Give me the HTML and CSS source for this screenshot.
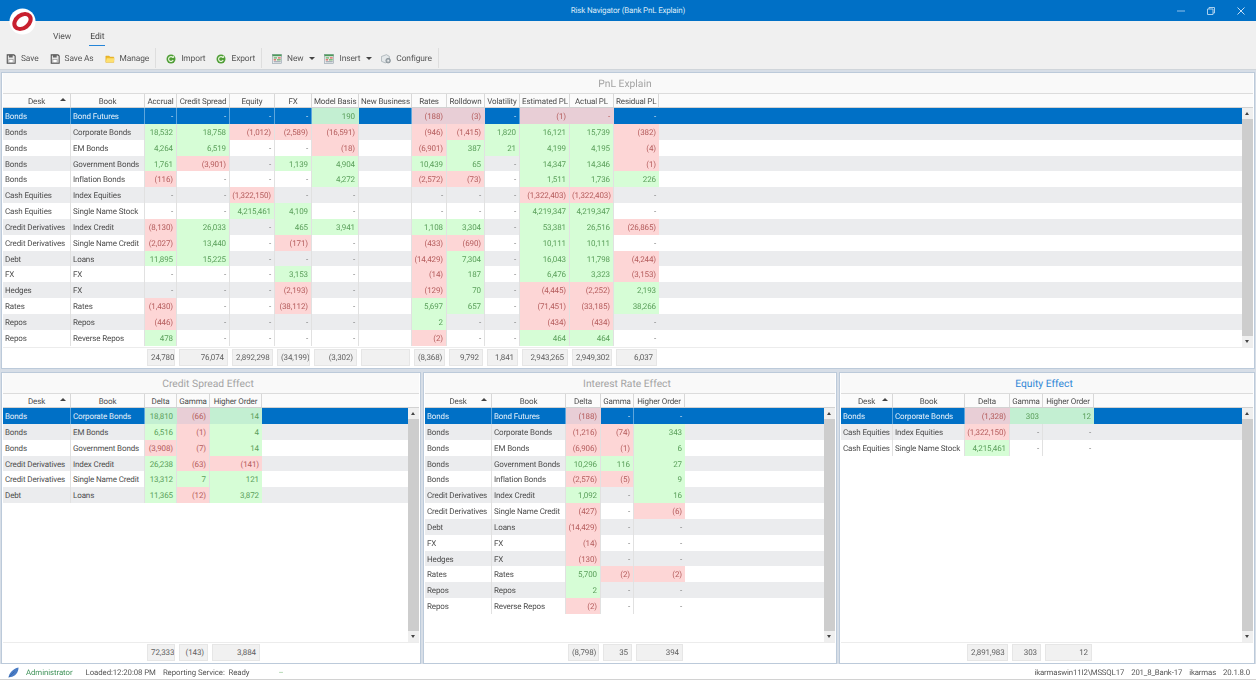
FILE: index.html
```html
<!DOCTYPE html>
<html lang="en">
<head>
<meta charset="utf-8">
<title>Risk Navigator (Bank PnL Explain)</title>
<link rel="stylesheet" href="styles.css">
</head>
<body>
<svg class="defs" width="0" height="0" aria-hidden="true">
  <symbol id="i-save" viewBox="0 0 12 12"><path d="M1.500 1h8l1.500 1.500V11h-9.500z" fill="#e6e6e6" stroke="#505050" stroke-width="1.300"/><rect x="3.500" y="1" width="4.500" height="3.200" fill="#666"/><rect x="3.500" y="6.500" width="5" height="4" fill="#fff" stroke="#777" stroke-width=".6"/></symbol>
  <symbol id="i-folder" viewBox="0 0 12 12"><path d="M1 2.500h4l1 1.200h4.500V10H1z" fill="#f0bb2c" stroke="#d9a520" stroke-width=".6"/><path d="M2 5.200h9.500L10.400 10H1z" fill="#fde070"/></symbol>
  <symbol id="i-cycle" viewBox="0 0 12 12"><circle cx="6" cy="6" r="5.400" fill="#4f9e36"/><path d="M8.600 7.300A2.900 2.900 0 1 1 8.300 4.200" fill="none" stroke="#e8f6dc" stroke-width="1.400"/><path d="M6.900 4.800l3-.2-.8-2.800z" fill="#e8f6dc"/></symbol>
  <symbol id="i-sheet" viewBox="0 0 12 12"><rect x=".5" y=".5" width="11" height="11" fill="#f4f4f4" stroke="#8a9aa6" stroke-width=".7"/><rect x=".5" y=".5" width="11" height="2.200" fill="#4d9a5a"/><rect x="2" y="4" width="4" height="1.400" fill="#5aa85a"/><rect x="7" y="4" width="3.500" height="1.400" fill="#d2524a"/><rect x="2" y="6.300" width="3" height="1.400" fill="#d2524a"/><rect x="6" y="6.300" width="4.500" height="1.400" fill="#5aa85a"/><rect x="2" y="8.600" width="8.500" height="1.400" fill="#9aa6b0"/></symbol>
  <symbol id="i-config" viewBox="0 0 12 12"><path d="M.5 3l6-2.200 3.500 2v5.700l-5 2.200-4.500-2z" fill="#e4e8ea" stroke="#8c979e" stroke-width=".7"/><circle cx="8.600" cy="8" r="2.800" fill="#a8b2b8" stroke="#70797f" stroke-width=".7"/><circle cx="8.600" cy="8" r="1" fill="#f4f4f4"/></symbol>
</svg>
<div class="app">
  <header class="titlebar">
    <span class="title">Risk Navigator (Bank PnL Explain)</span>
    <div class="winctl">
      <svg class="wi" viewBox="0 0 10 10"><path d="M1 5h8" stroke="#8fc0ea" stroke-width="1"/></svg>
      <svg class="wi" viewBox="0 0 10 10"><path d="M1.500 3h5.500v5.500H1.500zM3 3V1.500h5.500V7H7" fill="none" stroke="#a8cfee" stroke-width="1"/></svg>
      <svg class="wi" viewBox="0 0 10 10"><path d="M1.500 1.500l7 7M8.500 1.500l-7 7" stroke="#c4def4" stroke-width="1"/></svg>
    </div>
  </header>
  <svg class="logo" viewBox="0 0 28 28"><circle cx="14" cy="14" r="13.500" fill="#fff"/><g transform="rotate(-38 14 14)"><path d="M2.500 14a11.500 8.800 0 1 0 23 0a11.500 8.800 0 1 0-23 0Z M6.800 14a7.200 4.500 0 1 0 14.400 0a7.200 4.500 0 1 0-14.400 0Z" fill="#c8202f" fill-rule="evenodd"/></g></svg>
  <nav class="tabs"><span class="tab">View</span><span class="tab active">Edit</span></nav>
  <div class="toolbar">
    <div class="tgroup">
      <span class="tool"><svg class="ti"><use href="#i-save"/></svg>Save</span>
      <span class="tool"><svg class="ti"><use href="#i-save"/></svg>Save As</span>
      <span class="tool"><svg class="ti"><use href="#i-folder"/></svg>Manage</span>
    </div>
    <div class="tgroup">
      <span class="tool"><svg class="ti"><use href="#i-cycle"/></svg>Import</span>
      <span class="tool"><svg class="ti"><use href="#i-cycle"/></svg>Export</span>
    </div>
    <div class="tgroup">
      <span class="tool"><svg class="ti"><use href="#i-sheet"/></svg>New<b class="caret"></b></span>
      <span class="tool"><svg class="ti"><use href="#i-sheet"/></svg>Insert<b class="caret"></b></span>
      <span class="tool"><svg class="ti"><use href="#i-config"/></svg>Configure</span>
    </div>
  </div>
  <main class="content">
    <section class="panel pnl">
      <h2 class="ptitle">PnL Explain</h2>
      <div class="row head"><div class="sorted">Desk</div><div>Book</div><div>Accrual</div><div>Credit Spread</div><div>Equity</div><div>FX</div><div>Model Basis</div><div>New Business</div><div>Rates</div><div>Rolldown</div><div>Volatility</div><div>Estimated PL</div><div>Actual PL</div><div>Residual PL</div></div>
      <div class="gridbody">
        <div class="rows">
          <div class="row sel"><div class="l">Bonds</div><div class="l">Bond Futures</div><div>-</div><div>-</div><div>-</div><div>-</div><div class="g">190</div><div></div><div class="r">(188)</div><div class="r">(3)</div><div>-</div><div class="r">(1)</div><div class="r">-</div><div>-</div></div>
          <div class="row"><div class="l">Bonds</div><div class="l">Corporate Bonds</div><div class="g">18,532</div><div class="g">18,758</div><div class="r">(1,012)</div><div class="r">(2,589)</div><div class="r">(16,591)</div><div></div><div class="r">(946)</div><div class="r">(1,415)</div><div class="g">1,820</div><div class="g">16,121</div><div class="g">15,739</div><div class="r">(382)</div></div>
          <div class="row"><div class="l">Bonds</div><div class="l">EM Bonds</div><div class="g">4,264</div><div class="g">6,519</div><div>-</div><div>-</div><div class="r">(18)</div><div></div><div class="r">(6,901)</div><div class="g">387</div><div class="g">21</div><div class="g">4,199</div><div class="g">4,195</div><div class="r">(4)</div></div>
          <div class="row"><div class="l">Bonds</div><div class="l">Government Bonds</div><div class="g">1,761</div><div class="r">(3,901)</div><div>-</div><div class="g">1,139</div><div class="g">4,904</div><div></div><div class="g">10,439</div><div class="g">65</div><div>-</div><div class="g">14,347</div><div class="g">14,346</div><div class="r">(1)</div></div>
          <div class="row"><div class="l">Bonds</div><div class="l">Inflation Bonds</div><div class="r">(116)</div><div>-</div><div>-</div><div>-</div><div class="g">4,272</div><div></div><div class="r">(2,572)</div><div class="r">(73)</div><div>-</div><div class="g">1,511</div><div class="g">1,736</div><div class="g">226</div></div>
          <div class="row"><div class="l">Cash Equities</div><div class="l">Index Equities</div><div>-</div><div>-</div><div class="r">(1,322,150)</div><div>-</div><div>-</div><div></div><div>-</div><div>-</div><div>-</div><div class="r">(1,322,403)</div><div class="r">(1,322,403)</div><div>-</div></div>
          <div class="row"><div class="l">Cash Equities</div><div class="l">Single Name Stock</div><div>-</div><div>-</div><div class="g">4,215,461</div><div class="g">4,109</div><div>-</div><div></div><div>-</div><div>-</div><div>-</div><div class="g">4,219,347</div><div class="g">4,219,347</div><div>-</div></div>
          <div class="row"><div class="l">Credit Derivatives</div><div class="l">Index Credit</div><div class="r">(8,130)</div><div class="g">26,033</div><div>-</div><div class="g">465</div><div class="g">3,941</div><div></div><div class="g">1,108</div><div class="g">3,304</div><div>-</div><div class="g">53,381</div><div class="g">26,516</div><div class="r">(26,865)</div></div>
          <div class="row"><div class="l">Credit Derivatives</div><div class="l">Single Name Credit</div><div class="r">(2,027)</div><div class="g">13,440</div><div>-</div><div class="r">(171)</div><div>-</div><div></div><div class="r">(433)</div><div class="r">(690)</div><div>-</div><div class="g">10,111</div><div class="g">10,111</div><div>-</div></div>
          <div class="row"><div class="l">Debt</div><div class="l">Loans</div><div class="g">11,895</div><div class="g">15,225</div><div>-</div><div>-</div><div>-</div><div></div><div class="r">(14,429)</div><div class="g">7,304</div><div>-</div><div class="g">16,043</div><div class="g">11,798</div><div class="r">(4,244)</div></div>
          <div class="row"><div class="l">FX</div><div class="l">FX</div><div>-</div><div>-</div><div>-</div><div class="g">3,153</div><div>-</div><div></div><div class="r">(14)</div><div class="g">187</div><div>-</div><div class="g">6,476</div><div class="g">3,323</div><div class="r">(3,153)</div></div>
          <div class="row"><div class="l">Hedges</div><div class="l">FX</div><div>-</div><div>-</div><div>-</div><div class="r">(2,193)</div><div>-</div><div></div><div class="r">(129)</div><div class="g">70</div><div>-</div><div class="r">(4,445)</div><div class="r">(2,252)</div><div class="g">2,193</div></div>
          <div class="row"><div class="l">Rates</div><div class="l">Rates</div><div class="r">(1,430)</div><div>-</div><div>-</div><div class="r">(38,112)</div><div>-</div><div></div><div class="g">5,697</div><div class="g">657</div><div>-</div><div class="r">(71,451)</div><div class="r">(33,185)</div><div class="g">38,266</div></div>
          <div class="row"><div class="l">Repos</div><div class="l">Repos</div><div class="r">(446)</div><div>-</div><div>-</div><div>-</div><div>-</div><div></div><div class="g">2</div><div>-</div><div>-</div><div class="r">(434)</div><div class="r">(434)</div><div>-</div></div>
          <div class="row"><div class="l">Repos</div><div class="l">Reverse Repos</div><div class="g">478</div><div>-</div><div>-</div><div>-</div><div>-</div><div></div><div class="r">(2)</div><div>-</div><div>-</div><div class="g">464</div><div class="g">464</div><div>-</div></div>
        </div>
        <div class="scroll"><span class="sb up"></span><span class="sb down"></span></div>
      </div>
      <div class="row foot"><div></div><div></div><div>24,780</div><div>76,074</div><div>2,892,298</div><div>(34,199)</div><div>(3,302)</div><div></div><div>(8,368)</div><div>9,792</div><div>1,841</div><div>2,943,265</div><div>2,949,302</div><div>6,037</div></div>
    </section>
    <div class="lower">
      <section class="panel credit">
        <h2 class="ptitle">Credit Spread Effect</h2>
        <div class="row head"><div class="sorted">Desk</div><div>Book</div><div>Delta</div><div>Gamma</div><div>Higher Order</div></div>
        <div class="gridbody">
          <div class="rows">
            <div class="row sel"><div class="l">Bonds</div><div class="l">Corporate Bonds</div><div class="g">18,810</div><div class="r">(66)</div><div class="g">14</div></div>
            <div class="row"><div class="l">Bonds</div><div class="l">EM Bonds</div><div class="g">6,516</div><div class="r">(1)</div><div class="g">4</div></div>
            <div class="row"><div class="l">Bonds</div><div class="l">Government Bonds</div><div class="r">(3,908)</div><div class="r">(7)</div><div class="g">14</div></div>
            <div class="row"><div class="l">Credit Derivatives</div><div class="l">Index Credit</div><div class="g">26,238</div><div class="r">(63)</div><div class="r">(141)</div></div>
            <div class="row"><div class="l">Credit Derivatives</div><div class="l">Single Name Credit</div><div class="g">13,312</div><div class="g">7</div><div class="g">121</div></div>
            <div class="row"><div class="l">Debt</div><div class="l">Loans</div><div class="g">11,365</div><div class="r">(12)</div><div class="g">3,872</div></div>
          </div>
          <div class="scroll"><span class="sb up"></span><span class="sb down"></span></div>
        </div>
        <div class="row foot"><div></div><div></div><div>72,333</div><div>(143)</div><div>3,884</div></div>
      </section>
      <section class="panel rate">
        <h2 class="ptitle">Interest Rate Effect</h2>
        <div class="row head"><div class="sorted">Desk</div><div>Book</div><div>Delta</div><div>Gamma</div><div>Higher Order</div></div>
        <div class="gridbody">
          <div class="rows">
            <div class="row sel"><div class="l">Bonds</div><div class="l">Bond Futures</div><div class="r">(188)</div><div>-</div><div>-</div></div>
            <div class="row"><div class="l">Bonds</div><div class="l">Corporate Bonds</div><div class="r">(1,216)</div><div class="r">(74)</div><div class="g">343</div></div>
            <div class="row"><div class="l">Bonds</div><div class="l">EM Bonds</div><div class="r">(6,906)</div><div class="r">(1)</div><div class="g">6</div></div>
            <div class="row"><div class="l">Bonds</div><div class="l">Government Bonds</div><div class="g">10,296</div><div class="g">116</div><div class="g">27</div></div>
            <div class="row"><div class="l">Bonds</div><div class="l">Inflation Bonds</div><div class="r">(2,576)</div><div class="r">(5)</div><div class="g">9</div></div>
            <div class="row"><div class="l">Credit Derivatives</div><div class="l">Index Credit</div><div class="g">1,092</div><div>-</div><div class="g">16</div></div>
            <div class="row"><div class="l">Credit Derivatives</div><div class="l">Single Name Credit</div><div class="r">(427)</div><div>-</div><div class="r">(6)</div></div>
            <div class="row"><div class="l">Debt</div><div class="l">Loans</div><div class="r">(14,429)</div><div>-</div><div>-</div></div>
            <div class="row"><div class="l">FX</div><div class="l">FX</div><div class="r">(14)</div><div>-</div><div>-</div></div>
            <div class="row"><div class="l">Hedges</div><div class="l">FX</div><div class="r">(130)</div><div>-</div><div>-</div></div>
            <div class="row"><div class="l">Rates</div><div class="l">Rates</div><div class="g">5,700</div><div class="r">(2)</div><div class="r">(2)</div></div>
            <div class="row"><div class="l">Repos</div><div class="l">Repos</div><div class="g">2</div><div>-</div><div>-</div></div>
            <div class="row"><div class="l">Repos</div><div class="l">Reverse Repos</div><div class="r">(2)</div><div>-</div><div>-</div></div>
          </div>
          <div class="scroll"><span class="sb up"></span><span class="sb down"></span></div>
        </div>
        <div class="row foot"><div></div><div></div><div>(8,798)</div><div>35</div><div>394</div></div>
      </section>
      <section class="panel equity">
        <h2 class="ptitle focus">Equity Effect</h2>
        <div class="row head"><div class="sorted">Desk</div><div>Book</div><div>Delta</div><div>Gamma</div><div>Higher Order</div></div>
        <div class="gridbody">
          <div class="rows">
            <div class="row sel"><div class="l">Bonds</div><div class="l">Corporate Bonds</div><div class="r">(1,328)</div><div class="g">303</div><div class="g">12</div></div>
            <div class="row"><div class="l">Cash Equities</div><div class="l">Index Equities</div><div class="r">(1,322,150)</div><div>-</div><div>-</div></div>
            <div class="row"><div class="l">Cash Equities</div><div class="l">Single Name Stock</div><div class="g">4,215,461</div><div>-</div><div>-</div></div>
          </div>
          <div class="scroll"><span class="sb up"></span><span class="sb down"></span></div>
        </div>
        <div class="row foot"><div></div><div></div><div>2,891,983</div><div>303</div><div>12</div></div>
      </section>
    </div>
  </main>
  <footer class="status">
    <div class="sleft">
      <svg class="sicon" viewBox="0 0 12 12"><path d="M.5 11.500C1 7.500 5 1.500 11.500.5 11.500 6 7.500 10.500 3 10.800z" fill="#4a7cc4"/><path d="M1 11L7 5" stroke="#2d5ea6" stroke-width=".7"/></svg>
      <span class="admin">Administrator</span>
      <span class="loaded">Loaded:12:20:08 PM</span>
      <span>Reporting Service:&nbsp; Ready</span>
      <span class="tick">–</span>
    </div>
    <div class="sright">
      <span>ikarmaswin11I2\MSSQL17</span><span>201_8_Bank-17</span><span>ikarmas</span><span>20.1.8.0</span>
    </div>
  </footer>
</div>
</body>
</html>
```

FILE: styles.css
```css
* { box-sizing: border-box; }
html, body { margin: 0; padding: 0; }
body {
  width: 1256px; height: 680px; overflow: hidden;
  font-family: Roboto, "Open Sans", sans-serif;
  font-size: 8px; letter-spacing: -.12px; color: #555; background: #f0f0f0;
  text-rendering: geometricPrecision;
}
.defs { position: absolute; }
.app { position: relative; display: flex; flex-direction: column; height: 680px; filter: blur(.3px); }

.titlebar { height: 21px; flex: none; background: #0070c6; color: #dbeaf7; display: flex; align-items: center; justify-content: center; position: relative; font-size: 8px; letter-spacing: -.18px; }
.winctl { position: absolute; right: 10px; top: 6px; display: flex; gap: 20px; }
.wi { width: 10px; height: 10px; display: block; }
.logo { position: absolute; left: 8.500px; top: 8px; width: 27px; height: 27px; }

.tabs { height: 26px; flex: none; display: flex; padding-left: 53px; gap: 18px; align-items: flex-start; font-size: 8.600px; letter-spacing: -.1px; padding-top: 11px; }
.tab { height: 13.500px; line-height: 10px; color: #555; }
.tab.active { border-bottom: 1.500px solid #2585d8; padding: 0 1px; color: #444; }

.toolbar { height: 22px; flex: none; display: flex; align-items: center; padding-left: 6px; font-size: 8.400px; letter-spacing: -.1px; }
.tgroup { display: flex; height: 20px; align-items: center; border-right: 1px solid #dedede; margin-right: 10px; padding-right: 6px; }
.tool { display: flex; align-items: center; margin-right: 11px; padding-top: 1px; color: #555; white-space: nowrap; }
.tool:last-child { margin-right: 0; }
.ti { width: 10px; height: 10px; margin-right: 5px; flex: none; }
.caret { width: 0; height: 0; border: 3px solid transparent; border-top: 3px solid #444; border-bottom: 0; margin-left: 6px; margin-right: -2px; }

.content { flex: 1; display: flex; flex-direction: column; background: #d7dee7; padding: 2px 1px 0; gap: 3px; min-height: 0; border-top: 1px solid #d0d5da; }
.lower { flex: 1; display: flex; gap: 2px; min-height: 0; }
.panel { display: flex; flex-direction: column; border: 1px solid #bccada; background: #fff; min-width: 0; padding: 0 1px; }
.pnl { height: 297px; flex: none; --cols: 68px 74px 32px 53px 45px 37px 47px 53px 35px 38px 35px 50px 44px 45px 1fr; }
.credit { width: 420px; --cols: 68px 74px 32px 33px 52px 1fr; }
.rate { width: 414px; --cols: 67px 74px 35px 33px 51px 1fr; }
.equity { flex: 1; --cols: 52px 72px 45px 33px 51px 1fr; }

.ptitle { margin: 0; height: 20px; flex: none; font-weight: 400; font-size: 10.300px; letter-spacing: 0; line-height: 21px; padding-right: 6px; text-align: center; color: #a3a3a3; background: #f9f9f9; }
.ptitle.focus { color: #2f86d6; }

.row { display: grid; grid-template-columns: var(--cols); grid-auto-rows: 15.85px; height: 15.85px; line-height: 15.85px; }
.row > div { padding: 1px 3px 0 2px; text-align: right; border-right: 1px solid #e1e1e1; white-space: nowrap; overflow: hidden; color: #808080; }
.rows .row:nth-child(even) { background: #ebecee; }
.row > .l { text-align: left; padding-left: 2px; color: #4d4d4d; }
.row > .g { background: #d6fdd6; color: #5a9f5a; }
.row > .r { background: #fdd6d6; color: #b45c5c; }
.row > div:last-child { border-right: 0; }

.row.head { height: 15px; grid-auto-rows: 13px; line-height: 13px; flex: none; background: #fbfbfb; border-top: 1px solid #dcdcdc; border-bottom: 1px solid #d2d2d2; }
.row.head > div { text-align: center; color: #4d4d4d; border-right: 1px solid #d8d8d8; position: relative; padding: 1px 2px 0; }
.row.head > div.sorted::after { content: ""; position: absolute; right: 4px; top: 4px; border: 3px solid transparent; border-bottom: 3px solid #444; border-top: 0; }

.gridbody { flex: 1; display: flex; min-height: 0; }
.rows { flex: 1; min-width: 0; }
.row.sel { background: #0070c6; }
.row.sel > div { color: #cfe3f4; border-right-color: #5ea6dc; }
.row.sel > .l { color: #e6f1fa; }
.row.sel > .g { background: #c3efd2; color: #5a9f5a; border-right-color: #c3efd2; }
.row.sel > .r { background: #e8ced6; color: #b45c5c; border-right-color: #e8ced6; }
.scroll { width: 11px; flex: none; background: #cdcdcd; display: flex; flex-direction: column; justify-content: space-between; }
.sb { height: 11px; background: #efefef; position: relative; display: block; }
.sb::after { content: ""; position: absolute; left: 3px; top: 4px; border: 2.500px solid transparent; }
.sb.up::after { border-bottom: 3px solid #444; border-top: 0; }
.sb.down::after { border-top: 3px solid #444; border-bottom: 0; }

.row.foot { height: 21px; flex: none; grid-auto-rows: 17px; line-height: 15px; border-top: 1px solid #ececec; padding: 1px 0 2px; background: #fff; }
.row.foot > div { margin: 0 2px; padding: 1px 3px 0; background: #f1f1f1; border: 1px solid #e6e6e6; color: #5f5f5f; line-height: 14px; }
.row.foot > div:nth-child(-n+2) { background: transparent; border-color: transparent; }

.status { height: 16px; flex: none; background: #fff; border-bottom: 1px solid #d2d2d2; display: flex; justify-content: space-between; align-items: center; padding: 1px 6px 0 8px; font-size: 7.800px; letter-spacing: -.06px; }
.sleft, .sright { display: flex; align-items: center; }
.sleft span { margin-right: 7px; }
.sicon { width: 11px; height: 11px; margin-right: 7px; }
.sleft .admin { color: #3f9258; margin-right: 13px; }
.sleft .tick { color: #8bc48b; margin-left: 22px; }
.sright { letter-spacing: -.14px; }
.sright span { margin-left: 7px; }
```
